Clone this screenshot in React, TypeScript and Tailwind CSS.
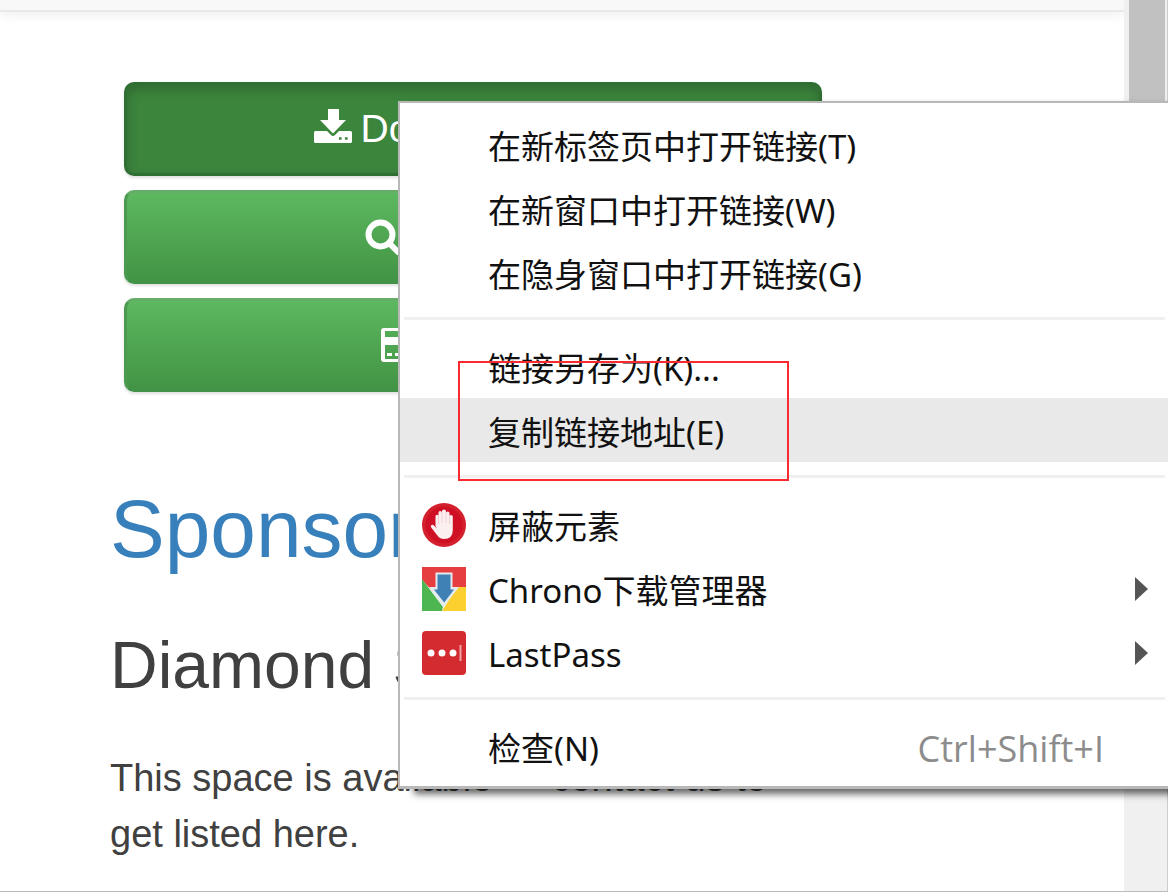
import type { ReactNode } from 'react';

type MenuItemProps = {
  label: string;
  icon?: ReactNode;
  shortcut?: string;
  hasSubmenu?: boolean;
  active?: boolean;
};

function DownloadIcon() {
  return (
    <svg className="mb-1.5 w-[38px] h-[34px]" viewBox="0 0 38 34" fill="currentColor" aria-hidden="true">
      <path d="M14 0h11v11h7L19 24.500 6 11h8z" />
      <path
        fillRule="evenodd"
        d="M0 23.500Q0 22 1.500 22h11.500l4 4q2 1.800 4 0l4-4h11.500Q38 22 38 23.500V32.500Q38 34 36.500 34h-35Q0 34 0 32.500zM25 28.200v2.600h2.600v-2.600zM31 28.200v2.600h2.600v-2.600z"
      />
    </svg>
  );
}

function SearchIcon() {
  return (
    <svg className="w-9 h-9" viewBox="0 0 36 36" fill="none" stroke="currentColor" aria-hidden="true">
      <circle cx="15.500" cy="15.500" r="12" strokeWidth="6" />
      <path d="M25 25l8 8" strokeWidth="6" strokeLinecap="round" />
    </svg>
  );
}

function CardIcon() {
  return (
    <svg className="w-10 h-[34px]" viewBox="0 0 40 34" fill="currentColor" aria-hidden="true">
      <path fillRule="evenodd" d="M3 0h34q3 0 3 3v28q0 3-3 3H3q-3 0-3-3V3q0-3 3-3zM4 3v6h32V3zM4 17v14h32V17z" />
      <path d="M6 25h5v3H6zM14 25h8v3h-8z" />
    </svg>
  );
}

function BlockIcon() {
  return (
    <svg className="w-11 h-11" viewBox="0 0 44 44" aria-hidden="true">
      <circle cx="22" cy="22" r="22" fill="#d41f2d" />
      <circle cx="22" cy="22" r="18.500" fill="#cf1024" />
      <path
        fill="#fbeff0"
        d="M13.500 23V13.500q0-1.700 1.500-1.700t1.500 1.700V10q0-1.900 1.700-1.900T20 10V8.500Q20 6.500 22 6.500t2 2V10q0-1.600 1.700-1.600T27.500 10v3.500q0-1.500 1.600-1.500t1.700 1.500V27q0 9-8.800 9-4.500 0-7-4L9.200 24.500Q8.300 22.500 9.500 22t2.500.500l3 3z"
      />
      <path d="M16.500 12v9M20 10v10M24 9v11M27.500 12v9" stroke="#efc9cd" strokeWidth="0.800" />
    </svg>
  );
}

function ChronoIcon() {
  return (
    <svg className="w-11 h-11" viewBox="0 0 44 44" aria-hidden="true">
      <path fill="#e63d40" d="M0 0h44v20H32L22 36 0 13z" />
      <path fill="#4db650" d="M0 12l21 28-1 4H0z" />
      <path fill="#fcd02f" d="M35 20h9v24H20z" />
      <path fill="#e4eaee" d="M7 20h30L21.500 40z" />
      <path
        fill="#3f80b5"
        stroke="#e4eaee"
        strokeWidth="2"
        d="M14.500 6.500h15V21.500h4.500L22.200 37 10 21.500h4.500z"
      />
    </svg>
  );
}

function LastPassIcon() {
  return (
    <svg className="w-11 h-11" viewBox="0 0 44 44" aria-hidden="true">
      <rect width="44" height="44" rx="4" fill="#d32b30" />
      <circle cx="9" cy="22" r="3.500" fill="#fff" />
      <circle cx="20" cy="22" r="3.500" fill="#fff" />
      <circle cx="31" cy="22" r="3.500" fill="#fff" />
      <path d="M38.500 14v16" stroke="#f0a3a6" strokeWidth="2" />
    </svg>
  );
}

function MenuItem({ label, icon, shortcut, hasSubmenu, active }: MenuItemProps) {
  return (
    <button
      type="button"
      role="menuitem"
      className={`flex w-full h-16 items-center gap-[22px] pl-[22px] pr-5 pt-0.5 text-left whitespace-nowrap ${
        active ? 'bg-[#e9e9e9]' : 'bg-white'
      }`}
    >
      <span className="w-11 h-11 shrink-0">{icon}</span>
      <span className="flex-1 pt-1">{label}</span>
      {shortcut && (
        <span className="pt-1 pr-11 text-[36px] text-[#8c8c8c] font-['Open_Sans',sans-serif]">{shortcut}</span>
      )}
      {hasSubmenu && (
        <svg className="w-[13px] h-6" viewBox="0 0 13 24" fill="#555" aria-hidden="true">
          <path d="M0 0l13 12L0 24z" />
        </svg>
      )}
    </button>
  );
}

function Separator() {
  return (
    <div role="separator" className="h-[30px] pt-[13px] pl-1 pr-[3px]">
      <div className="h-[3px] bg-[#f0f0f0]" />
    </div>
  );
}

function ContextMenu() {
  return (
    <div
      role="menu"
      className="absolute top-[101px] left-[398px] right-0 border-2 border-r-0 border-b-[3px] border-[#b8b8b8] bg-white pt-[9px] pb-2 text-[33px] leading-[48px] text-[#111] font-['Noto_Sans','Noto_Sans_CJK_SC',sans-serif] shadow-[16px_5px_7px_rgba(0,0,0,0.6)]"
    >
      <MenuItem label="在新标签页中打开链接(T)" />
      <MenuItem label="在新窗口中打开链接(W)" />
      <MenuItem label="在隐身窗口中打开链接(G)" />
      <Separator />
      <MenuItem label="链接另存为(K)..." />
      <MenuItem label="复制链接地址(E)" active />
      <Separator />
      <MenuItem label="屏蔽元素" icon={<BlockIcon />} />
      <MenuItem label="Chrono下载管理器" icon={<ChronoIcon />} hasSubmenu />
      <MenuItem label="LastPass" icon={<LastPassIcon />} hasSubmenu />
      <Separator />
      <MenuItem label="检查(N)" shortcut="Ctrl+Shift+I" />

      {/* highlight around the copy-link entry */}
      <div className="absolute top-[258px] left-[58px] w-[331px] h-[120px] border-2 border-[#fb2a30] pointer-events-none" />
    </div>
  );
}

const buttonBase =
  'flex w-full h-[94px] items-center justify-center gap-2 rounded-[10px] border-[3px] text-[39px] text-white';
const buttonGreen =
  'border-[#4b9a50] border-t-[#65ad68] border-b-[#43924a] bg-linear-to-b from-[#5db860] to-[#429444] shadow-[0_2px_3px_rgba(0,0,0,0.12)]';
const buttonPressed =
  'border-[#2f6f33] bg-[#3c853d] shadow-[inset_0_5px_12px_rgba(0,0,0,0.2),0_2px_3px_rgba(0,0,0,0.12)]';

export default function App() {
  return (
    <div className="relative flex min-h-screen overflow-hidden border-b border-[#bbb] bg-white font-['Liberation_Sans',Arial,sans-serif] text-[38px] leading-[56px] text-[#404040]">
      <div className="flex-1">
        <header className="h-3 border-b-2 border-[#e9e9e9] bg-[#f8f8f8] shadow-[0_3px_12px_rgba(0,0,0,0.07)]" />

        <main className="ml-[110px] max-w-[726px] pt-[70px]">
          <div className="flex flex-col gap-[14px] px-[14px]">
            <button type="button" className={`${buttonBase} ${buttonPressed}`}>
              <DownloadIcon />
              Download 4.0.1
            </button>
            <button type="button" className={`${buttonBase} ${buttonGreen}`}>
              <SearchIcon />
              Examples
            </button>
            <button type="button" className={`${buttonBase} ${buttonGreen}`}>
              <CardIcon />
              Support
            </button>
          </div>

          <h2 className="mt-[92px] text-[82px] leading-[90px]">
            <a href="#sponsors" className="text-[#3880bc]">
              Sponsors
            </a>
          </h2>
          <h3 className="mt-[52px] text-[66px] leading-[78px]">Diamond Sponsors</h3>
          <p className="mt-[46px] pr-12">This space is available — contact us to get listed here.</p>
        </main>
      </div>

      <div className="w-11 shrink-0 border-r border-[#ccc] bg-[#f0f0f0] pl-[5px] pr-[2px]">
        <div className="h-[300px] bg-[#c1c1c1]" />
      </div>

      <ContextMenu />
    </div>
  );
}
